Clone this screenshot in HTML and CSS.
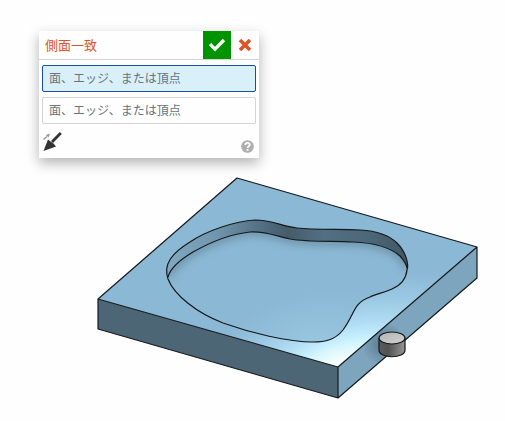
FILE: index.html
```
<!DOCTYPE html>
<html lang="ja">
<head>
  <meta charset="UTF-8" />
  <meta name="viewport" content="width=device-width, initial-scale=1.0"/>
  <title>側面一致</title>
  <link rel="stylesheet" href="styles.css">
</head>
<body>
  <main class="viewport">
    <svg class="model" viewBox="0 0 505 421" aria-hidden="true">
      <defs>
        <radialGradient id="topFace" gradientUnits="userSpaceOnUse" cx="0" cy="0" r="1" gradientTransform="translate(340 374) rotate(-20) scale(175 88)">
          <stop offset="0" stop-color="#ffffff"/>
          <stop offset="0.16" stop-color="#f2fdfc"/>
          <stop offset="0.3" stop-color="#d6f6fd"/>
          <stop offset="0.36" stop-color="#c6f0ff"/>
          <stop offset="0.52" stop-color="#b0dcf4"/>
          <stop offset="0.75" stop-color="#9ac7e2"/>
          <stop offset="1" stop-color="#8bb8d4"/>
        </radialGradient>
        <radialGradient id="floor" gradientUnits="userSpaceOnUse" cx="0" cy="0" r="1" gradientTransform="translate(310 350) rotate(-14) scale(100 56)">
          <stop offset="0" stop-color="#9ac7e2"/>
          <stop offset="0.5" stop-color="#92bfda"/>
          <stop offset="1" stop-color="#8bb8d4"/>
        </radialGradient>
        <linearGradient id="wall" gradientUnits="userSpaceOnUse" x1="167" y1="0" x2="408" y2="0">
          <stop offset="0" stop-color="#7fa9c2"/>
          <stop offset="0.2" stop-color="#7197ae"/>
          <stop offset="0.36" stop-color="#587588"/>
          <stop offset="0.5" stop-color="#455c6b"/>
          <stop offset="0.65" stop-color="#527083"/>
          <stop offset="0.85" stop-color="#4b6677"/>
          <stop offset="1" stop-color="#405765"/>
        </linearGradient>
        <linearGradient id="pinSide" x1="0" y1="0" x2="1" y2="0">
          <stop offset="0" stop-color="#5b5b5b"/>
          <stop offset="0.35" stop-color="#525252"/>
          <stop offset="0.7" stop-color="#777777"/>
          <stop offset="1" stop-color="#969696"/>
        </linearGradient>
        <linearGradient id="pinTop" x1="0" y1="0" x2="1" y2="1">
          <stop offset="0" stop-color="#b2b2b2"/>
          <stop offset="1" stop-color="#d3d3d3"/>
        </linearGradient>
        <radialGradient id="pinShade" gradientUnits="userSpaceOnUse" cx="384" cy="344" r="22">
          <stop offset="0.3" stop-color="#3f5b6d" stop-opacity="0.45"/>
          <stop offset="1" stop-color="#3f5b6d" stop-opacity="0"/>
        </radialGradient>
        <filter id="soft" x="-20%" y="-20%" width="140%" height="140%">
          <feGaussianBlur stdDeviation="4"/>
        </filter>
        <clipPath id="floorClip">
          <path d="M168 277C170 269 178 261 193 252C209 243 230 234 250 232C265 231 276 236 290 239C307 242 330 241 353 242C378 243 392 249 400 256C405 261 407 267 407 268C406 280 399 286 392 289C383 293 376 294 370 297C353 303 355 314 343 330C335 340 325 342 313 342C288 342 251 333 223 323C197 313 174 295 168 277Z"/>
        </clipPath>
      </defs>

      <!-- plate -->
      <path d="M98 299L338 367V398L98 329Z" fill="#4d6676"/>
      <path d="M338 367L477 247V278L338 398Z" fill="#7ea5be"/>
      <path d="M338 367L477 247V278L338 398Z" fill="url(#pinShade)"/>
      <path d="M237 178L477 247L338 367L98 299Z" fill="url(#topFace)"/>

      <!-- pocket -->
      <path d="M168 279C163 264 172 253 190 242C206 231 235 221 255 220C272 220 281 226 297 228C315 230 340 229 360 230C378 231 390 236 397 243C406 252 409 264 407 270C406 280 399 286 392 289C383 293 376 294 370 297C353 303 355 314 343 330C335 340 325 342 313 342C288 342 251 333 223 323C197 313 174 295 168 279Z" fill="url(#wall)"/>
      <path d="M168 277C170 269 178 261 193 252C209 243 230 234 250 232C265 231 276 236 290 239C307 242 330 241 353 242C378 243 392 249 400 256C405 261 407 267 407 268C406 280 399 286 392 289C383 293 376 294 370 297C353 303 355 314 343 330C335 340 325 342 313 342C288 342 251 333 223 323C197 313 174 295 168 277Z" fill="url(#floor)"/>
      <g clip-path="url(#floorClip)">
        <path d="M168 277C170 269 178 261 193 252C209 243 230 234 250 232C265 231 276 236 290 239C307 242 330 241 353 242C378 243 392 249 400 256C405 261 407 267 407 268" fill="none" stroke="#45606f" stroke-opacity="0.5" stroke-width="7" filter="url(#soft)"/>
      </g>
      <g class="edge">
        <path d="M168 277C170 269 178 261 193 252C209 243 230 234 250 232C265 231 276 236 290 239C307 242 330 241 353 242C378 243 392 249 400 256C405 261 407 267 407 268"/>
        <path d="M168 279C163 264 172 253 190 242C206 231 235 221 255 220C272 220 281 226 297 228C315 230 340 229 360 230C378 231 390 236 397 243C406 252 409 264 407 270C406 280 399 286 392 289C383 293 376 294 370 297C353 303 355 314 343 330C335 340 325 342 313 342C288 342 251 333 223 323C197 313 174 295 168 279Z"/>
        <path d="M237 178L477 247L338 367L98 299ZM98 299V329L338 398V367M338 398L477 278V247"/>
      </g>

      <!-- pin -->
      <path class="edge pin-side" d="M379 338V350C379 359 405 359 405 350V338"/>
      <ellipse class="edge pin-top" cx="392" cy="338" rx="13" ry="6"/>
    </svg>

    <form class="dialog">
      <header class="dialog-header">
        <h1 class="dialog-title">側面一致</h1>
        <button class="icon-btn accept" type="button" aria-label="OK">
          <svg width="18" height="14" viewBox="0 0 18 14"><path d="M2 6.200L7 11.200L16 2" fill="none" stroke="#fff" stroke-width="3.300"/></svg>
        </button>
        <button class="icon-btn cancel" type="button" aria-label="キャンセル">
          <svg width="14" height="14" viewBox="0 0 14 14"><path d="M2 2L12 12M12 2L2 12" fill="none" stroke="#e0532a" stroke-width="3.600"/></svg>
        </button>
      </header>
      <div class="fields">
        <input class="field active" type="text" aria-label="1つ目の選択" placeholder="面、エッジ、または頂点">
        <input class="field" type="text" aria-label="2つ目の選択" placeholder="面、エッジ、または頂点">
      </div>
      <footer class="dialog-footer">
        <button class="tool-btn" type="button" aria-label="方向を反転">
          <svg width="20" height="22" viewBox="0 0 20 22">
            <path d="M0.500 8.500L4 5.500" fill="none" stroke="#999" stroke-width="1.500"/>
            <path d="M7 2.500L5.600 6.600L2.800 3.900Z" fill="#999"/>
            <path d="M17.800 2L9 11" fill="none" stroke="#333" stroke-width="2.800"/>
            <path d="M0.500 20L5 8.500L7.500 10.500L10.500 12.500L13 15.500Z" fill="#333"/>
          </svg>
        </button>
        <button class="tool-btn" type="button" aria-label="ヘルプ">
          <svg width="13" height="13" viewBox="0 0 13 13">
            <circle cx="6.500" cy="6.500" r="6.300" fill="#adadad"/>
            <path d="M4.300 5C4.300 2.200 8.800 2.200 8.800 4.800C8.800 6.300 6.600 6.200 6.600 7.900" fill="none" stroke="#fff" stroke-width="1.800"/>
            <path d="M5.600 9H7.500V10.800H5.600Z" fill="#fff"/>
          </svg>
        </button>
      </footer>
    </form>
  </main>
</body>
</html>
```

FILE: styles.css
```
* {
  box-sizing: border-box;
}

body {
  margin: 0;
  background-color: #fefefe;
  font-family: "Open Sans", "Noto Sans CJK JP", sans-serif;
}

.viewport {
  position: relative;
}

.model {
  display: block;
  width: 100%;
}

.edge {
  fill: none;
  stroke: #15191c;
  stroke-width: 1.2;
  stroke-linejoin: round;
}

.pin-side {
  fill: url(#pinSide);
}

.pin-top {
  fill: url(#pinTop);
}

/* floats over the model */
.dialog {
  position: absolute;
  top: 31px;
  left: 39px;
  width: 220px;
  background-color: #fefefe;
  box-shadow: 0 5px 12px rgba(0,0,0,0.3);
}

.dialog-header {
  display: flex;
  align-items: center;
  padding-left: 6px;
  border-bottom: 1px solid #d4d4d4;
}

.dialog-title {
  flex: 1;
  margin: 0;
  color: #e0532a;
  font-size: 13px;
  font-weight: 400;
  line-height: 28px;
}

.icon-btn, .tool-btn {
  display: flex;
  align-items: center;
  justify-content: center;
  padding: 0;
  border: none;
  background: none;
  cursor: pointer;
}

.icon-btn {
  width: 28px;
  height: 28px;
}

.accept {
  background-color: #009400;
}

.fields {
  display: flex;
  flex-direction: column;
  gap: 5px;
  padding: 5px 3px;
}

.field {
  width: 100%;
  height: 27px;
  padding: 0 6px;
  border: 1px solid #d4d4d4;
  border-radius: 2px;
  background-color: #fefefe;
  color: #333;
  font-family: inherit;
  font-size: 12px;
}

.field::placeholder {
  color: #66747c;
  opacity: 1;
}

.field.active {
  border-color: #1650a8;
  background-color: #d9f0f9;
}

.field:focus {
  outline: none;
  border-color: #1650a8;
}

.dialog-footer {
  display: flex;
  align-items: flex-end;
  justify-content: space-between;
  padding: 2px 5px 5px 4px;
}
```
